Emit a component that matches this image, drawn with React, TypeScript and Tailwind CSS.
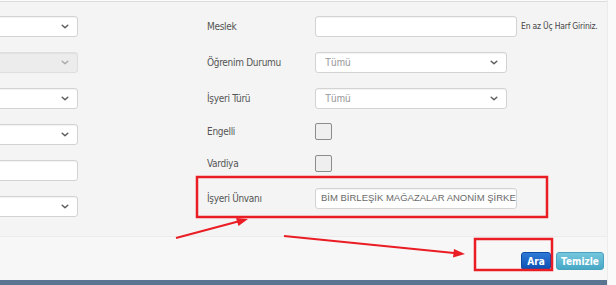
import React from "react";

const Chevron = ({ muted }: { muted?: boolean }) => (
    <svg width="8" height="5" viewBox="0 0 8 5" className="shrink-0">
        <path d="M1.2 1.2 L4 3.8 L6.8 1.2" fill="none" stroke={muted ? "#aaa" : "#5e5e5e"} strokeWidth="1.5" strokeLinecap="round" strokeLinejoin="round" />
    </svg>
);

function Select({ text, w, disabled }: { text?: string; w: string; disabled?: boolean }) {
    return (
        <div
            className={`${w} h-[21px] flex items-center justify-between pl-[9px] pr-[8px] rounded-[3px] border shadow-[inset_0_1px_1px_rgba(0,0,0,0.05)] ${
                disabled ? "bg-[#ececec] border-[#dedede]" : "bg-white border-[#d3d3d3]"
            }`}
        >
            <span className="text-[10px] text-[#999] font-['Liberation_Sans',sans-serif]">{text}</span>
            <Chevron muted={disabled} />
        </div>
    );
}

function TextBox({ w, value }: { w: string; value?: string }) {
    return (
        <div className={`${w} h-[21px] flex items-center px-[5px] bg-white border border-[#d3d3d3] rounded-[3px] overflow-hidden whitespace-nowrap shadow-[inset_0_1px_1px_rgba(0,0,0,0.05)]`}>
            <span className="text-[9.5px] text-[#6a6a6a] font-['Liberation_Sans',sans-serif]">{value}</span>
        </div>
    );
}

const CheckBox = () => <div className="w-[17px] h-[17px] bg-[#efefef] border-[1.5px] border-[#8c8c8c] rounded-[2px]" />;

function Row({ label, mt, children }: { label: string; mt: string; children: React.ReactNode }) {
    return (
        <div className={`flex items-center ${mt}`}>
            <div className="w-[108px] text-[10px] text-[#555] tracking-[-0.3px] font-['DejaVu_Sans_Condensed','DejaVu_Sans',sans-serif]">{label}</div>
            {children}
        </div>
    );
}

export default function App() {
    return (
        <div className="relative w-[616px] h-[285px] overflow-hidden bg-[#fafafa] flex">
            <div className="w-[607px] flex flex-col">
                <div className="h-[1px] bg-[#fbfbfb]" />
                {/* search panel */}
                <div className="h-[235px] bg-[#f4f4f4] border-t border-[#dcdcdc] flex">
                    <div className="w-[78px] pt-[14px] flex flex-col gap-[15px]">
                        <div className="-ml-[12px]"><Select w="w-[90px]" /></div>
                        <div className="-ml-[12px]"><Select w="w-[90px]" disabled /></div>
                        <div className="-ml-[12px]"><Select w="w-[90px]" /></div>
                        <div className="-ml-[12px]"><Select w="w-[90px]" /></div>
                        <div className="-ml-[12px]"><TextBox w="w-[90px]" /></div>
                        <div className="-ml-[12px]"><Select w="w-[90px]" /></div>
                    </div>
                    <div className="ml-[129px] pt-[14px] flex flex-col">
                        <Row label="Meslek" mt="mt-0">
                            <TextBox w="w-[202px]" />
                            <span className="ml-[4px] text-[8.5px] text-[#444] tracking-[-0.2px] font-['DejaVu_Sans_Condensed','DejaVu_Sans',sans-serif]">En az Üç Harf Giriniz.</span>
                        </Row>
                        <Row label="Öğrenim Durumu" mt="mt-[15px]">
                            <Select w="w-[192px]" text="Tümü" />
                        </Row>
                        <Row label="İşyeri Türü" mt="mt-[15px]">
                            <Select w="w-[192px]" text="Tümü" />
                        </Row>
                        <Row label="Engelli" mt="mt-[14px]">
                            <CheckBox />
                        </Row>
                        <Row label="Vardiya" mt="mt-[15px]">
                            <CheckBox />
                        </Row>
                        <Row label="İşyeri Ünvanı" mt="mt-[16px]">
                            <TextBox w="w-[202px]" value="BİM BİRLEŞİK MAĞAZALAR ANONİM ŞİRKE" />
                        </Row>
                    </div>
                </div>
                {/* actions */}
                <div className="h-[44px] bg-[#f7f7f7] border-t border-[#ebebeb] flex justify-end items-end gap-[5px] pr-[3px] pb-[10px]">
                    <button className="w-[30px] h-[18px] rounded-[3px] border border-[#0c4aa6] bg-gradient-to-b from-[#2f7ad6] to-[#0b4fb4] text-white text-[10px] font-bold font-['DejaVu_Sans_Condensed','DejaVu_Sans',sans-serif]">
                        Ara
                    </button>
                    <button className="w-[48px] h-[18px] rounded-[3px] border border-[#4aa3be] bg-gradient-to-b from-[#74c7de] to-[#46a8c6] text-white text-[10px] font-bold font-['DejaVu_Sans_Condensed','DejaVu_Sans',sans-serif]">
                        Temizle
                    </button>
                </div>
                <div className="h-[5px] bg-[#5b7492]" />
            </div>
            <div className="flex-1 border-l border-[#ececec] bg-[#fafafa]" />

            {/* red annotations */}
            <svg className="absolute inset-0 pointer-events-none" width="616" height="285" viewBox="0 0 616 285">
                <rect x="197" y="177" width="350" height="40" fill="none" stroke="#ea1c24" strokeWidth="2.5" />
                <rect x="475" y="239" width="77" height="31" fill="none" stroke="#ea1c24" strokeWidth="2.5" />
                <line x1="176" y1="238" x2="238" y2="221.5" stroke="#ea1c24" strokeWidth="2" />
                <polygon points="248,219 236,218 238.5,226" fill="#ea1c24" />
                <line x1="284" y1="236" x2="454" y2="253" stroke="#ea1c24" strokeWidth="2" />
                <polygon points="465,254 454,249 453,257.5" fill="#ea1c24" />
            </svg>
        </div>
    );
}
